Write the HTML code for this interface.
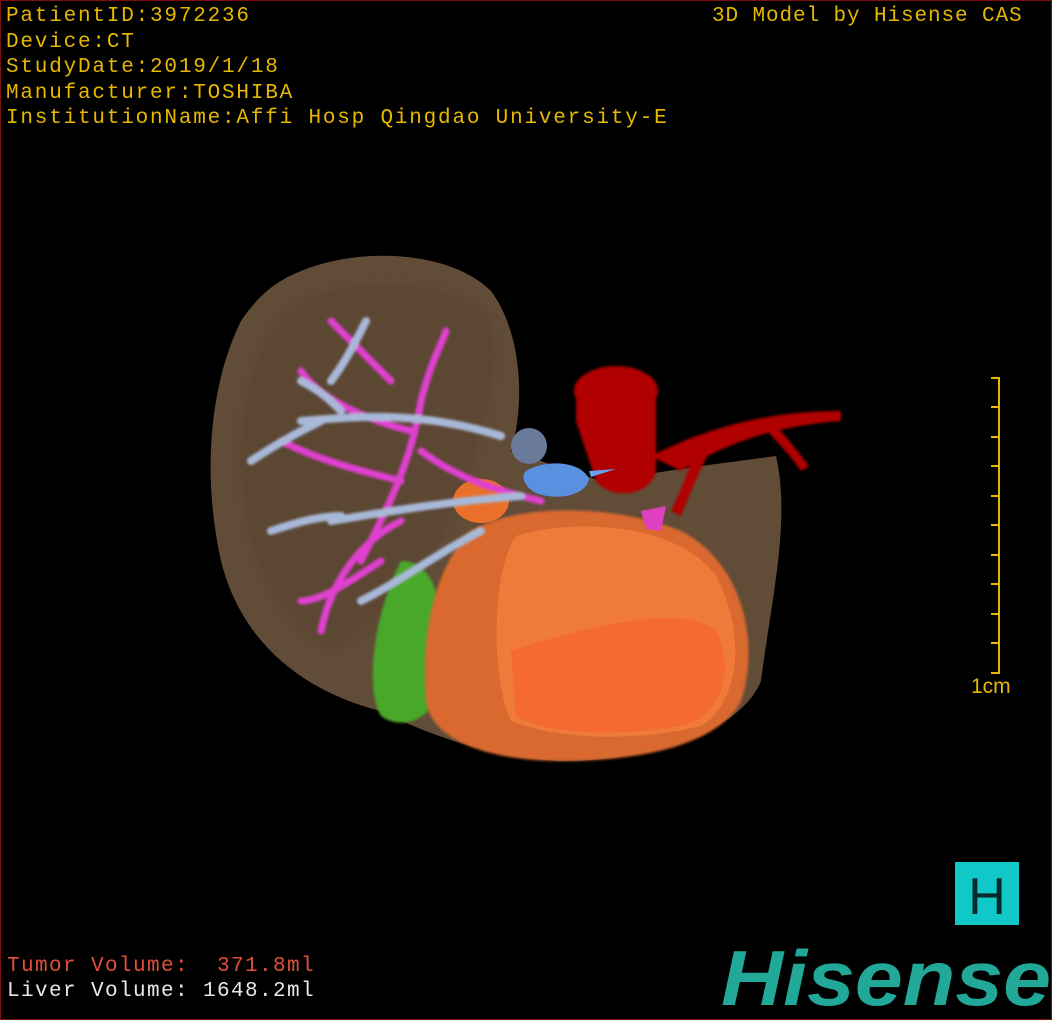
<!DOCTYPE html>
<html><head><meta charset="utf-8"><style>
html,body{margin:0;padding:0;background:#000}
#c{position:relative;width:1050px;height:1018px;border:1px solid #7a1010;overflow:hidden;background:#000}
.t{position:absolute;font-family:"Liberation Mono","DejaVu Sans Mono",monospace;color:#e6b800;font-size:21px;line-height:25.5px;white-space:pre;letter-spacing:1.8px}
</style></head><body><div id="c">
<div class="t" style="left:5px;top:3px">PatientID:3972236
Device:CT
StudyDate:2019/1/18
Manufacturer:TOSHIBA
InstitutionName:Affi Hosp Qingdao University-E</div>
<div class="t" style="left:711px;top:3px;letter-spacing:0.9px">3D Model by Hisense CAS</div>
<div class="t" style="left:6px;top:953px;color:#e0503a;letter-spacing:1.4px">Tumor Volume:  371.8ml</div>
<div class="t" style="left:6px;top:978px;color:#e8e8e8;letter-spacing:1.4px">Liver Volume: 1648.2ml</div>
<svg width="1050" height="1018" style="position:absolute;left:0;top:0">
<defs><filter id="b"><feGaussianBlur stdDeviation="4"/></filter><filter id="b2"><feGaussianBlur stdDeviation="1.2"/></filter></defs>
<path d="M300 270 C360 245 450 250 490 290 C520 330 525 400 510 450 L600 480 L700 465 L775 455 C790 520 770 600 760 680 C740 730 650 760 560 760 C480 755 420 730 380 710 C300 690 240 640 220 560 C200 470 210 380 240 320 C260 290 280 278 300 270Z" fill="#66503a" opacity="0.95"/>
<path d="M300 300 C370 270 460 280 490 320 C500 380 480 430 470 470 C440 560 380 620 330 650 C270 620 240 540 240 460 C240 380 265 320 300 300Z" fill="#5a4530" filter="url(#b)" opacity="0.7"/>
<g fill="#b00000" filter="url(#b2)">
<ellipse cx="615" cy="390" rx="42" ry="25"/>
<path d="M575 390 L655 390 L655 470 C650 495 610 500 595 480 L575 420Z"/>
<path d="M650 455 C700 430 760 410 840 410 L840 420 C770 425 720 445 680 470Z"/>
<path d="M700 440 C690 460 680 490 670 510 L680 515 C690 490 700 465 712 445Z"/>
<path d="M770 420 C790 440 800 455 808 465 L800 470 C790 455 775 440 762 425Z"/>
</g>
<path d="M400 560 C440 560 445 620 440 680 C435 720 400 730 380 715 C365 690 370 620 400 560Z" fill="#4aa82a" filter="url(#b2)"/>
<path d="M470 530 C520 500 620 505 680 530 C740 560 760 640 740 700 C720 740 650 760 560 760 C490 760 430 740 425 700 C420 640 430 570 470 530Z" fill="#d9692e" filter="url(#b2)"/>
<path d="M515 535 C580 515 680 525 715 575 C745 630 740 700 700 725 C640 740 560 740 510 720 C490 680 490 570 515 535Z" fill="#f07a3a"/>
<path d="M510 650 C570 630 680 600 715 630 C735 670 720 715 680 725 C620 735 550 735 515 715Z" fill="#f46a30"/>
<ellipse cx="480" cy="500" rx="28" ry="22" fill="#e8702a"/>
<path d="M640 510 L665 505 L660 530 L645 528Z" fill="#e040c0"/>
<g fill="none" stroke-linecap="round" filter="url(#b2)">
<g stroke="#e040d0" stroke-width="7">
<path d="M360 560 C390 500 410 460 420 400 C430 360 440 345 445 330"/>
<path d="M400 480 C360 470 320 460 280 440"/>
<path d="M410 430 C370 420 320 400 300 370"/>
<path d="M400 520 C360 540 330 580 320 630"/>
<path d="M380 560 C350 580 320 600 300 600"/>
<path d="M420 450 C460 480 500 490 540 500"/>
<path d="M330 320 C350 340 370 360 390 380"/>
</g>
<g stroke="#a8b8d8" stroke-width="8">
<path d="M300 420 C360 415 420 410 500 435"/>
<path d="M330 520 C390 510 450 500 520 495"/>
<path d="M360 600 C400 580 440 550 480 530"/>
<path d="M250 460 C280 440 300 430 320 420"/>
<path d="M270 530 C300 520 320 515 340 515"/>
<path d="M330 380 C345 360 355 340 365 320"/>
<path d="M300 380 C320 390 330 400 340 410"/>
</g>
</g>
<circle cx="528" cy="445" r="18" fill="#6a7a9a"/>
<path d="M525 470 C545 458 580 460 588 478 C585 495 555 500 535 492 C522 485 520 475 525 470Z" fill="#5a90e0"/>
<path d="M588 470 L615 468 L590 476Z" fill="#6aa0f0"/>
<g stroke="#e6b800" stroke-width="2">
<line x1="998" y1="377" x2="998" y2="673"/>
<path d="M990 377H999M990 406H998M990 436H998M990 465H998M990 495H998M990 524H998M990 554H998M990 583H998M990 613H998M990 642H998M990 672H999"/>
</g>
<text x="970" y="692" font-family="Liberation Sans,sans-serif" font-size="21" fill="#e6b800">1cm</text>
<rect x="954" y="861" width="64" height="63" fill="#10c8c8"/>
<text x="986" y="913" text-anchor="middle" font-family="Liberation Sans,sans-serif" font-size="52" fill="#0a2a2a">H</text>
<text x="1050" y="1004" text-anchor="end" font-family="Liberation Sans,sans-serif" font-weight="bold" font-style="italic" font-size="78" fill="#21a898" textLength="330" lengthAdjust="spacingAndGlyphs">Hisense</text>
</svg>
</div></body></html>
